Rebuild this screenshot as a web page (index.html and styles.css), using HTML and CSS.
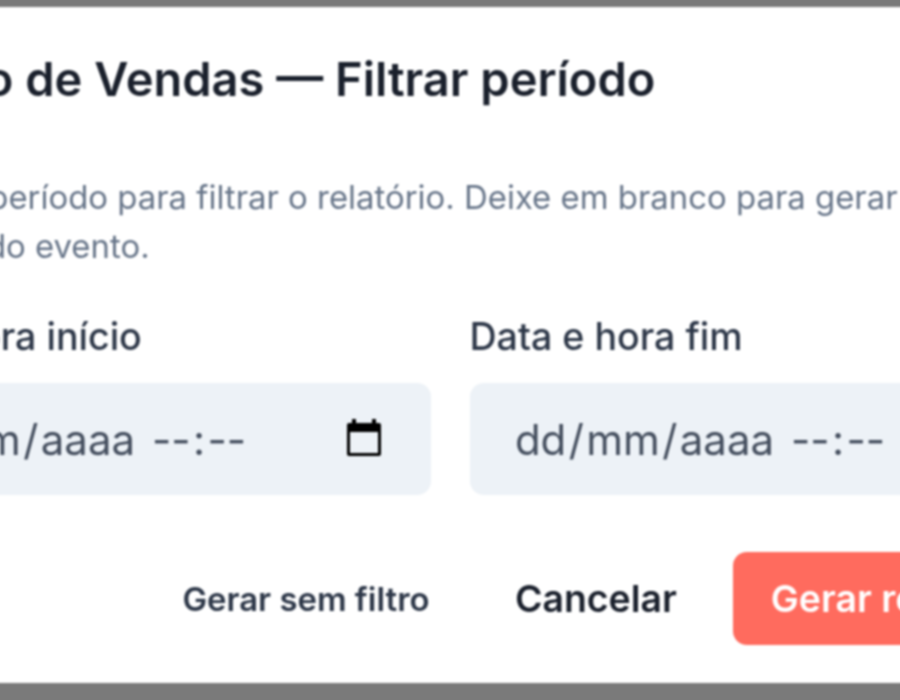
FILE: index.html
```html
<!doctype html>
<html lang="pt-BR">
    <head>
        <meta charset="utf-8">
        <title>Relatório de Vendas</title>
        <link rel="stylesheet" href="styles.css">
    </head>

    <body>
        <div class="overlay">
            <div class="modal">
                <h2 class="title">Relatório de Vendas — Filtrar período</h2>

                <p class="desc">
                    Escolha o período para filtrar o relatório. Deixe em branco para gerar com<br>
                    &thinsp;os dados do evento.
                </p>

                <div class="fields">
                    <div class="field">
                        <label class="label">Data e hora início</label>
                        <div class="input">
                            <span class="part">dd</span>/<span class="part">mm</span>/<span class="part">aaaa</span>
                            <span class="time"><span class="part">--</span>:<span class="part">--</span></span>
                            <svg class="cal" viewBox="0 0 34 38" width="34" height="38">
                                <path d="M5 0h4v4h16V0h4v4h3c1.1 0 2 .9 2 2v29c0 1.1-.9 2-2 2H2c-1.1 0-2-.9-2-2V6c0-1.1.9-2 2-2h3zM3 13v21h28V13z" fill-rule="evenodd"/>
                            </svg>
                        </div>
                    </div>
                    <div class="field">
                        <label class="label">Data e hora fim</label>
                        <div class="input">
                            <span class="part">dd</span>/<span class="part">mm</span>/<span class="part">aaaa</span>
                            <span class="time"><span class="part">--</span>:<span class="part">--</span></span>
                            <svg class="cal" viewBox="0 0 34 38" width="34" height="38">
                                <path d="M5 0h4v4h16V0h4v4h3c1.1 0 2 .9 2 2v29c0 1.1-.9 2-2 2H2c-1.1 0-2-.9-2-2V6c0-1.1.9-2 2-2h3zM3 13v21h28V13z" fill-rule="evenodd"/>
                            </svg>
                        </div>
                    </div>
                </div>

                <div class="actions">
                    <button class="btn small">Gerar sem filtro</button>
                    <button class="btn">Cancelar</button>
                    <button class="btn primary">Gerar relatório</button>
                </div>
            </div>
        </div>
    </body>
</html>
```

FILE: styles.css
```css
html{
    font-family: Inter, sans-serif;
}
body{
    margin: 0;
    height: 700px;
    overflow: hidden;
    background: #7a7a7a;
}
.overlay{
    display: flex;
    justify-content: center;
    height: 700px;
    padding-top: 7px;
    box-sizing: border-box;
}
.modal{
    flex: none;
    width: 1239px;
    height: 676px;
    padding: 0 48px;
    background: white;
    filter: blur(0.8px);
}
.title{
    margin: 42px 0 0 -19px;
    font-size: 47px;
    line-height: 60px;
    font-weight: 600;
    color: #1A202C;
}
.desc{
    margin: 64px 0 0 -2px;
    font-size: 32.9px;
    line-height: 49px;
    color: #677589;
}
.fields{
    display: grid;
    grid-template-columns: 600px 600px;
    column-gap: 39px;
    margin-top: 40px;
}
.label{
    display: block;
    font-size: 37.6px;
    line-height: 52px;
    font-weight: 500;
    color: #2D3748;
}
.input{
    display: flex;
    align-items: center;
    height: 112px;
    margin-top: 20px;
    padding: 0 45px 0 43px;
    background: #EDF2F7;
    border-radius: 14px;
    font-size: 42px;
    color: #444E5E;
}
.part{
    padding: 0 2.4px;
}
.time{
    margin-left: 12px;
}
.cal{
    margin: 0 5px 2px auto;
}
.actions{
    display: flex;
    justify-content: flex-end;
    align-items: center;
    gap: 18.8px;
    margin-top: 57px;
}
.btn{
    height: 93px;
    padding: 0 37.6px;
    border: none;
    border-radius: 14px;
    background: none;
    font-family: inherit;
    font-size: 37.4px;
    font-weight: 600;
    color: #1A202C;
}
.small{
    padding: 0 29px;
    font-size: 32.9px;
    color: #2D3748;
}
.primary{
    background: #FF6B5E;
    color: white;
}
```
